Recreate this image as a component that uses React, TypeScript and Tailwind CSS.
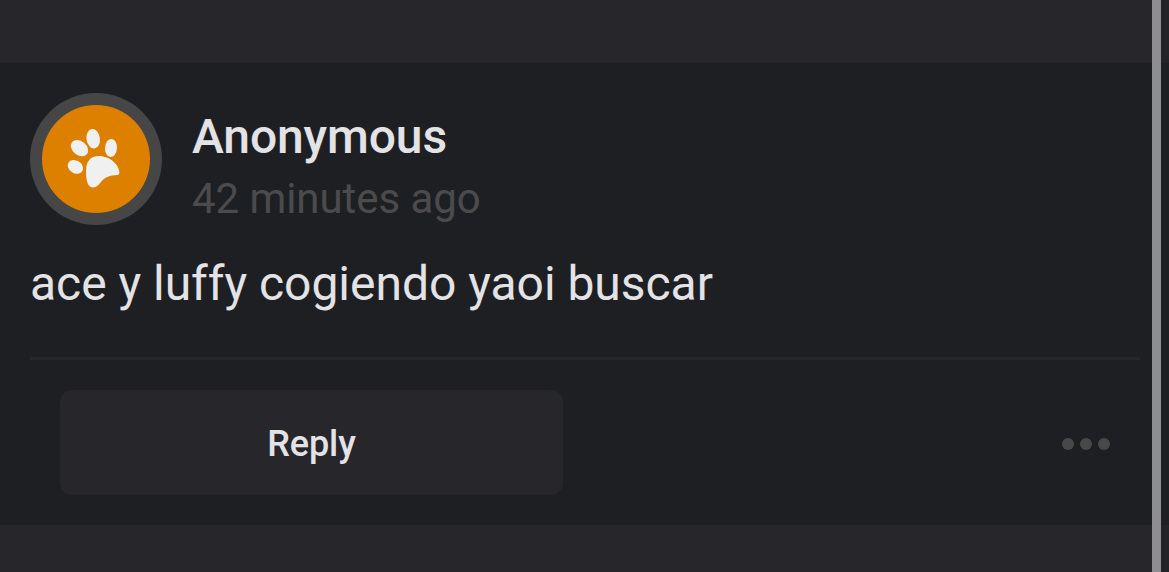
interface Comment {
  author: string;
  time: string;
  text: string;
}

const comment: Comment = {
  author: "Anonymous",
  time: "42 minutes ago",
  text: "ace y luffy cogiendo yaoi buscar",
};

function PawAvatar() {
  return (
    <svg viewBox="0 0 132 132" className="size-[132px] shrink-0">
      <circle cx="66" cy="66" r="66" fill="#464646" />
      <circle cx="66" cy="66" r="54" fill="#dd8000" />
      <g fill="#f0f0f0">
        <ellipse cx="45.4" cy="73.9" rx="8.2" ry="6.3" transform="rotate(33 45.4 73.9)" />
        <ellipse cx="49.5" cy="55.1" rx="9.6" ry="7" transform="rotate(40 49.5 55.1)" />
        <ellipse cx="63.2" cy="45.7" rx="6.7" ry="9.8" transform="rotate(-8 63.2 45.7)" />
        <ellipse cx="81" cy="55" rx="6" ry="9" transform="rotate(4 81 55)" />
        <path d="M56 78C56 69 60 63 69 63C80 63 89.4 72 89.4 79.5C89.4 82 87.5 82 84.5 82.2C77.5 82.8 74 85 70.5 89.5C67.5 93.5 65.5 94.4 62.5 94.4C57.5 94.4 56 87 56 78Z" />
      </g>
    </svg>
  );
}

export default function App() {
  return (
    <div className="flex h-screen overflow-hidden bg-[#1e1f22] font-['Roboto',sans-serif] text-[#e3e3e6]">
      <main className="flex min-w-0 flex-1 flex-col bg-[#27262b]">
        <article className="mt-[63px] h-[462px] bg-[#1e1f22] pt-[30px] pr-3 pl-[30px]">
          {/* Author */}
          <header className="flex gap-[30px]">
            <PawAvatar />
            <div className="pt-4">
              <h2 className="text-[48px] leading-[56px] font-medium tracking-[-0.12px] whitespace-nowrap">
                {comment.author}
              </h2>
              <p className="mt-[10px] text-[42px] leading-[48px] tracking-[-0.06px] whitespace-nowrap text-[#4b4b4d]">
                {comment.time}
              </p>
            </div>
          </header>

          <p className="mt-[31px] text-[48px] leading-[56px] tracking-[-0.03px] whitespace-nowrap">
            {comment.text}
          </p>

          {/* Actions */}
          <footer className="mt-[45px] flex items-center justify-between border-t-3 border-[#27272b] pt-[30px] pr-[30px] pl-[30px]">
            <button className="h-[105px] w-[503px] rounded-[12px] bg-[#27262b] pt-0.5 text-[36px] font-medium tracking-[-0.1px]">
              Reply
            </button>
            <button className="flex gap-1.5 pt-[3px]" aria-label="More">
              <span className="size-3 rounded-full bg-[#484848]" />
              <span className="size-3 rounded-full bg-[#484848]" />
              <span className="size-3 rounded-full bg-[#484848]" />
            </button>
          </footer>
        </article>
      </main>

      {/* Scrollbar */}
      <div className="w-[9px] bg-[#8e8d91]" />
      <div className="w-2 bg-[#242428] pt-[63px]">
        <div className="h-[462px] bg-[#1e1f22]" />
      </div>
    </div>
  );
}
